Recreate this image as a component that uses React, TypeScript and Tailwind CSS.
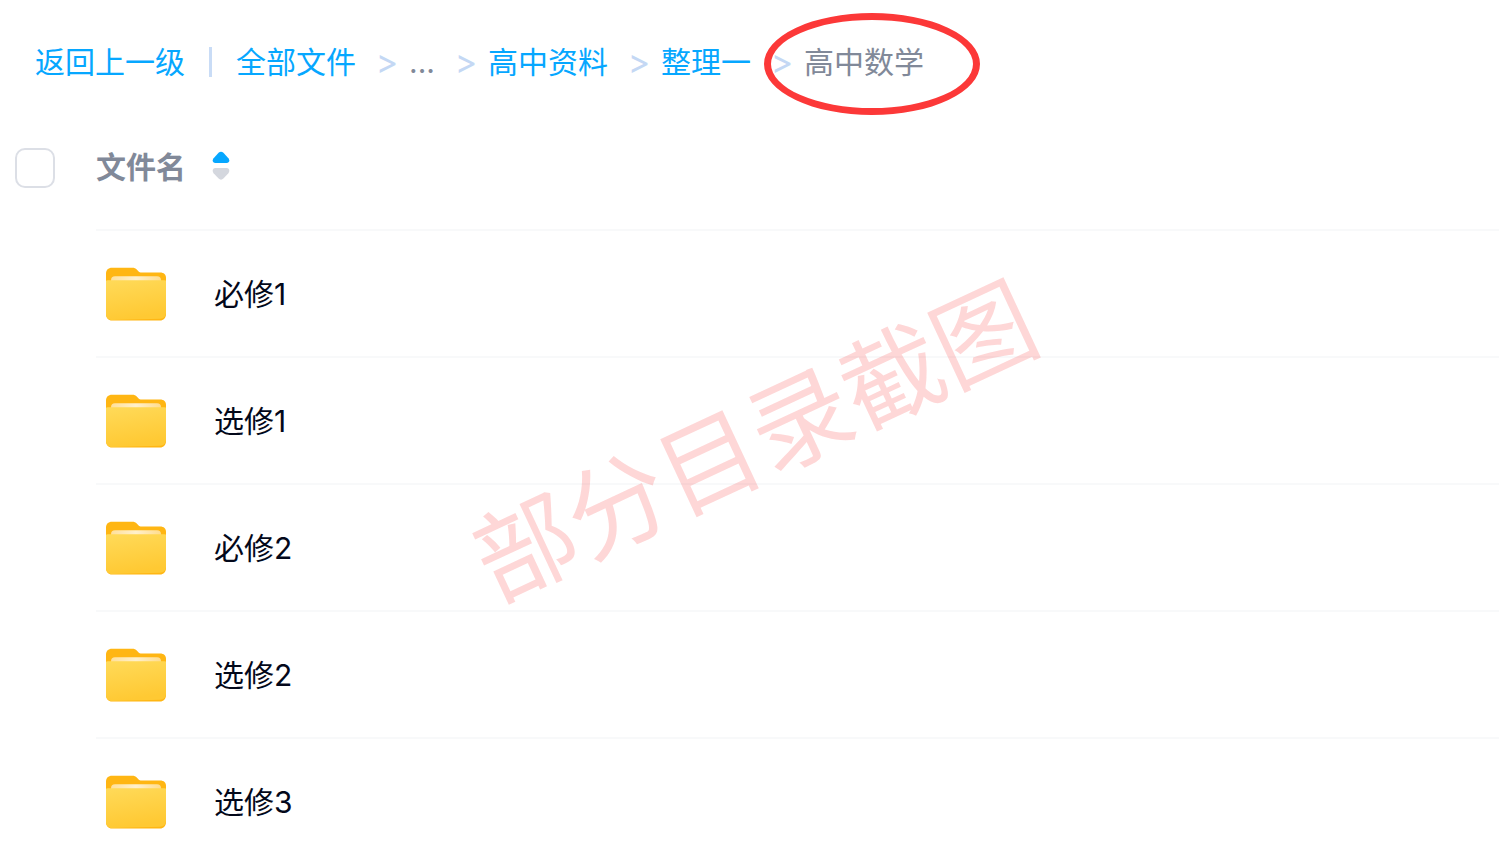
import { Fragment } from "react";

const parents = ["全部文件", "...", "高中资料", "整理一"];
const folders = ["必修1", "选修1", "必修2", "选修2", "选修3"];

function FolderIcon() {
  return (
    <svg viewBox="0 0 60 54" className="h-[54px] w-[60px] shrink-0" aria-hidden="true">
      <defs>
        <linearGradient id="folder-front" x1="0" y1="0" x2="0.25" y2="1">
          <stop offset="0" stopColor="#ffda59" />
          <stop offset="1" stopColor="#ffc933" />
        </linearGradient>
        <linearGradient id="folder-paper" x1="0" y1="0" x2="1" y2="0">
          <stop offset="0" stopColor="#ffe09a" />
          <stop offset="0.5" stopColor="#fff0cc" />
          <stop offset="1" stopColor="#ffdc8c" />
        </linearGradient>
      </defs>
      <path
        d="M6 0.8H26C28.4 0.8 29.6 1.4 31 2.8L32.6 4.4C33.4 5.2 34.2 5.5 35.4 5.5H54C58 5.5 60 7.7 60 11V47C60 51 57.5 53.5 54 53.5H6C2.5 53.5 0 51 0 47V7C0 3 2.2 0.8 6 0.8Z"
        fill="#ffb613"
      />
      <path d="M9 9.3H51C53.6 9.3 55 10.9 55 13.2V18H5V13.2C5 10.9 6.4 9.3 9 9.3Z" fill="url(#folder-paper)" />
      <path
        d="M0 13.8C1 13.3 2 13.2 4 13.2H56C58 13.2 59 13.2 60 13.6V45.6C60 49.4 57.5 51.6 54 51.7L6 53C2.5 53 0 50.8 0 47Z"
        fill="url(#folder-front)"
      />
    </svg>
  );
}

function SortIcon() {
  return (
    <svg viewBox="0 0 18 30" className="mb-[3px] h-[30px] w-[18px]" aria-hidden="true">
      <path
        d="M6.6 1.8C8 0.4 10 0.4 11.4 1.8L16.4 7.2C18.2 9.6 17.2 12 14.6 12H3.4C0.8 12 -0.2 9.6 1.6 7.2Z"
        fill="#06a7ff"
      />
      <path
        d="M6.6 27.6C8 29 10 29 11.4 27.6L16.4 22.2C18.2 19.8 17.2 17 14.6 17H3.4C0.8 17 -0.2 19.8 1.6 22.2Z"
        fill="#d4d7de"
      />
    </svg>
  );
}

export default function App() {
  return (
    <main className="relative h-screen overflow-hidden bg-white font-['Inter','Noto_Sans_CJK_SC',sans-serif] text-[30px] leading-[44px] text-[#03081a]">
      <nav aria-label="路径" className="flex items-center pt-10 pl-[35px] whitespace-nowrap">
        <a href="#up" className="text-[#06a7ff]">
          返回上一级
        </a>
        <span className="mx-6 h-[30px] w-[3px] bg-[#c9dcf6]" />
        {parents.map((name) => (
          <Fragment key={name}>
            <a href="#folder" className={name === "..." ? "text-[#818999]" : "text-[#06a7ff]"}>
              {name}
            </a>
            <span className="mr-3 ml-[21px] flex w-5 justify-center text-[34px] text-[#c4d8f4]">&gt;</span>
          </Fragment>
        ))}
        <span className="relative text-[#818999]" aria-current="page">
          高中数学
          <span className="absolute -top-[27px] -left-[40px] h-[102px] w-[216px] rounded-[50%] border-[7px] border-[#fc3838]" />
        </span>
      </nav>

      <table className="mt-[22px] w-full border-separate border-spacing-0 text-left">
        <thead>
          <tr className="h-[123px]">
            <th className="w-24 pl-[15px] align-top">
              <input
                type="checkbox"
                aria-label="全选"
                className="mt-[42px] block size-10 appearance-none rounded-[10px] border-2 border-[#dcdfe6] bg-white"
              />
            </th>
            <th className="align-top font-bold text-[#818999]">
              <button type="button" className="mt-[39px] flex items-center gap-[26px]">
                文件名
                <SortIcon />
              </button>
            </th>
          </tr>
        </thead>
        <tbody>
          {folders.map((name) => (
            <tr key={name} className="h-[127px]">
              <td />
              <td className="border-t-2 border-[#f8f9fa] pl-[10px]">
                <a href="#folder" className="flex items-center gap-12">
                  <FolderIcon />
                  {name}
                </a>
              </td>
            </tr>
          ))}
        </tbody>
      </table>

      <div className="pointer-events-none absolute top-[391px] left-[452px] w-[606px] -rotate-[25deg] text-center text-[101px] leading-[101px] whitespace-nowrap text-[#fc3838]/20">
        部分目录截图
      </div>
    </main>
  );
}
